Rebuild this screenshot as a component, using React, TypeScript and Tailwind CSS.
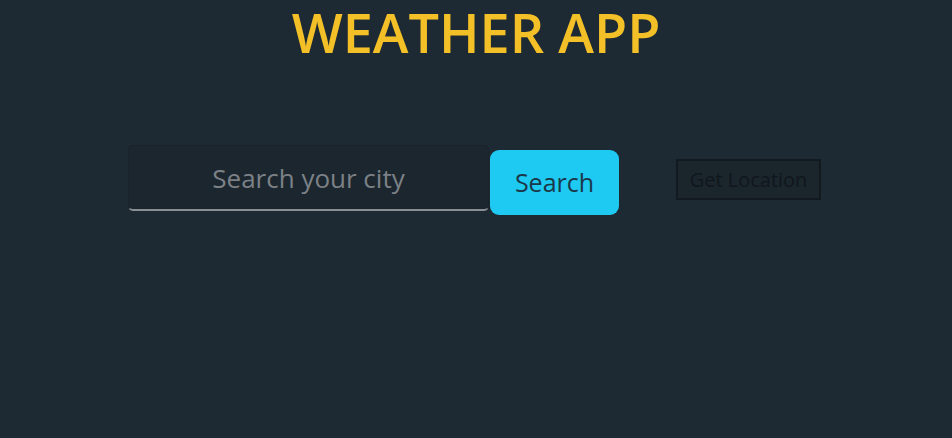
export default function App() {
  return (
    <div className="min-h-screen w-full bg-[#1e2a33] font-['Open_Sans',sans-serif]">
      <h1 className="pt-[3px] text-center text-[54px] font-semibold leading-[58px] text-[#f3c027]">
        WEATHER APP
      </h1>
      <div className="mt-[84px] flex items-start pl-[128px]">
        <input
          type="text"
          placeholder="Search your city"
          className="h-[66px] w-[361px] rounded-[5px] border border-[#1a232a] border-b-2 border-b-[#8a8f94] bg-[#1c262e] text-center text-[26px] text-[#9aa0a5] placeholder:text-[#7b8186] outline-none"
        />
        <button className="mt-[5px] ml-[1px] h-[65px] w-[129px] rounded-[9px] bg-[#1ec9f2] text-[25px] text-[#1a3848]">
          Search
        </button>
        <button className="mt-[14px] ml-[57px] h-[41px] w-[145px] border-2 border-[#121a1f] bg-[#1b252c] text-[20px] leading-none text-[#10171c]">
          Get Location
        </button>
      </div>
    </div>
  );
}
